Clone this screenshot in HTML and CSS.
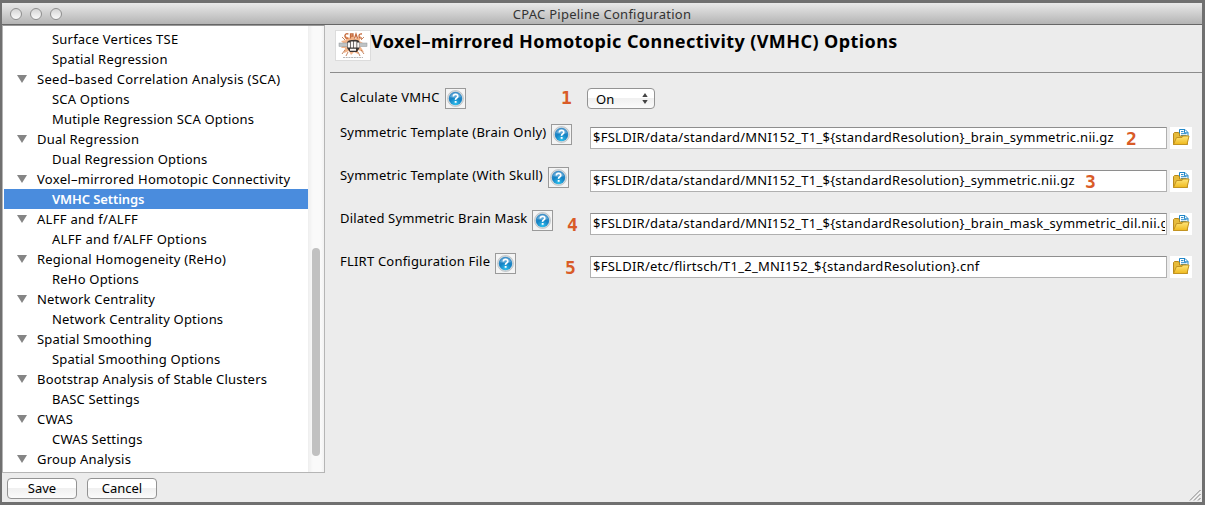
FILE: index.html
```html
<!DOCTYPE html>
<html lang="en">
<head>
<meta charset="utf-8">
<title>CPAC Pipeline Configuration</title>
<link rel="stylesheet" href="styles.css">
</head>
<body>
<svg width="0" height="0" class="defs" aria-hidden="true">
  <defs>
    <radialGradient id="blue" cx="50%" cy="90%" r="85%">
      <stop offset="0" stop-color="#2fc0ee"/><stop offset=".55" stop-color="#1482c4"/><stop offset="1" stop-color="#3f8fc8"/>
    </radialGradient>
    <linearGradient id="gold" x1="0" y1="0" x2="0" y2="1">
      <stop offset="0" stop-color="#ffe67a"/><stop offset="1" stop-color="#efb91d"/>
    </linearGradient>
    <symbol id="help" viewBox="0 0 17 17">
      <circle cx="8.5" cy="8.5" r="8" fill="#d5dadd" stroke="#b3babe" stroke-width=".7"/>
      <circle cx="8.5" cy="8.5" r="6.7" fill="url(#blue)"/>
      <path d="M3 7a5.8 5.8 0 0 1 11 0q-5.500 2-11 0z" fill="#8fc6e8" opacity=".5"/>
      <path d="M6.300 6.500Q6.400 4.400 8.600 4.400T10.800 6.300Q10.800 7.400 9.600 8.100T8.600 9.900" fill="none" stroke="#fff" stroke-width="1.700"/>
      <rect x="7.700" y="11" width="1.900" height="1.800" fill="#fff"/>
    </symbol>
    <symbol id="folder" viewBox="0 0 22 22">
      <path d="M9.500 2.500h5.500l3 3v6h-8.500z" fill="#fff" stroke="#2187c9"/>
      <path d="M14.500 2.500v3.300h3.500M11 4.600h2.500M11 6.700h5.500M11 8.500h5.500" fill="none" stroke="#2187c9"/>
      <path d="M3.500 17.500v-11l1-1h4l1 1.500v2h8v8.500z" fill="#e6bc3c" stroke="#b98a1c"/>
      <path d="M3.500 17.500l3-7h5.500l1-1.500h6l-2 8.500z" fill="url(#gold)" stroke="#c39422"/>
    </symbol>
  </defs>
</svg>
<div class="window">
  <header class="titlebar">
    <div class="lights"><i></i><i></i><i></i></div>
    <span class="title">CPAC Pipeline Configuration</span>
  </header>
  <div class="content">
    <aside class="side">
      <div class="tree">
        <ul class="items">
          <li class="leaf">Surface Vertices TSE</li>
          <li class="leaf">Spatial Regression</li>
          <li class="node wide">Seed–based Correlation Analysis (SCA)</li>
          <li class="leaf">SCA Options</li>
          <li class="leaf">Mutiple Regression SCA Options</li>
          <li class="node">Dual Regression</li>
          <li class="leaf">Dual Regression Options</li>
          <li class="node wide">Voxel–mirrored Homotopic Connectivity</li>
          <li class="leaf selected">VMHC Settings</li>
          <li class="node wide">ALFF and f/ALFF</li>
          <li class="leaf wide">ALFF and f/ALFF Options</li>
          <li class="node">Regional Homogeneity (ReHo)</li>
          <li class="leaf">ReHo Options</li>
          <li class="node">Network Centrality</li>
          <li class="leaf">Network Centrality Options</li>
          <li class="node">Spatial Smoothing</li>
          <li class="leaf">Spatial Smoothing Options</li>
          <li class="node">Bootstrap Analysis of Stable Clusters</li>
          <li class="leaf">BASC Settings</li>
          <li class="node">CWAS</li>
          <li class="leaf">CWAS Settings</li>
          <li class="node">Group Analysis</li>
        </ul>
        <div class="scroll"><div class="thumb"></div></div>
      </div>
      <div class="buttons"><div class="btn">Save</div><div class="btn">Cancel</div></div>
    </aside>
    <main class="panel">
      <div class="heading">
        <svg class="logo" viewBox="0 0 36 31">
          <rect x=".5" y=".5" width="35" height="30" fill="#fff" stroke="#dcdcdc"/>
          <path d="M18 5l2 4 6-3-1.500 5 3.500 2-3 3 4 6-6-2 0 4-4-2-3 3-2-4-5 2 1-5-4 0 3-4-3-3 5-1-2-5 5 3z" fill="#f3b58a"/>
          <path d="M10 20l-3 4M26 20l3 4M10 10L7 7M26 10l3-3M13 22l-2 4M23 22l2 4" stroke="#b5673a" fill="none" stroke-width=".8"/>
          <path d="M13.500 4q-3.500-1-3.500 2t3.500 2M15.500 8.500V4h2.500v2h-2M19.500 8.500l1.500-4.500 1.500 4.500M27 4q-3-.5-3 2t3 2" fill="none" stroke="#c4683a" stroke-width="1.300"/>
          <rect x="4" y="13" width="28" height="3.500" fill="#bfc4c6" stroke="#92979a" stroke-width=".5"/>
          <path d="M12 12q2-2.500 5.500-2 6-1 7 2v6l-2.500 4h-7l-3-4z" fill="#3a3432"/>
          <path d="M12.600 12.500h2.500v5h-2.500zM15.800 11.500h2.500v6h-2.500zM19 11.500h2.500v6H19zM22.200 12.500h2.200v5h-2.200zM15 18.700h6v2h-6z" fill="#f8f5f3"/>
          <path d="M8 27.500h20" stroke="#b5b5b5" stroke-dasharray="2 .7"/>
        </svg>
        <h1>Voxel–mirrored Homotopic Connectivity (VMHC) Options</h1>
      </div>
      <div class="form">
        <div class="row first">
          <label class="l1">Calculate VMHC</label><span class="help"><svg><use href="#help"/></svg></span>
          <div class="select"><span>On</span><svg viewBox="0 0 6 11"><path d="M3 0l2.700 4H.3zM3 11L.3 7h5.400z" fill="#444"/></svg></div>
          <b class="num n1">1</b>
        </div>
        <div class="row">
          <div class="name"><label class="l2">Symmetric Template (Brain Only)</label><span class="help"><svg><use href="#help"/></svg></span></div>
          <div class="field"><span>$FSLDIR/data/standard/MNI152_T1_${standardResolution}_brain_symmetric.nii.gz</span></div>
          <svg class="folder"><use href="#folder"/></svg>
          <b class="num n2">2</b>
        </div>
        <div class="row">
          <div class="name"><label class="l3">Symmetric Template (With Skull)</label><span class="help"><svg><use href="#help"/></svg></span></div>
          <div class="field"><span>$FSLDIR/data/standard/MNI152_T1_${standardResolution}_symmetric.nii.gz</span></div>
          <svg class="folder"><use href="#folder"/></svg>
          <b class="num n3">3</b>
        </div>
        <div class="row">
          <div class="name"><label class="l4">Dilated Symmetric Brain Mask</label><span class="help"><svg><use href="#help"/></svg></span></div>
          <div class="field"><span>$FSLDIR/data/standard/MNI152_T1_${standardResolution}_brain_mask_symmetric_dil.nii.gz</span></div>
          <svg class="folder"><use href="#folder"/></svg>
          <b class="num n4">4</b>
        </div>
        <div class="row">
          <div class="name"><label class="l5">FLIRT Configuration File</label><span class="help"><svg><use href="#help"/></svg></span></div>
          <div class="field"><span>$FSLDIR/etc/flirtsch/T1_2_MNI152_${standardResolution}.cnf</span></div>
          <svg class="folder"><use href="#folder"/></svg>
          <b class="num n5">5</b>
        </div>
      </div>
    </main>
  </div>
  <svg class="grip" viewBox="0 0 12 12"><path d="M1 11.500L11.500 1M5 11.500L11.500 5M9 11.500L11.500 9" fill="none" stroke="#777" stroke-width="1"/><path d="M2.200 11.500L11.500 2.200M6.200 11.500L11.500 6.200" fill="none" stroke="#fff" stroke-width=".7"/></svg>
</div>
</body>
</html>
```
FILE: styles.css
```css
* { box-sizing: border-box; }
body {
  margin: 0; width: 1205px; height: 505px; overflow: hidden;
  background: #707070; padding: 3px 3px 3px 2px;
  font: 13px/20px "Noto Sans", sans-serif; color: #000;
}
.defs { position: absolute; }
.window { position: relative; height: 499px; background: #ececec; display: flex; flex-direction: column; }
.titlebar {
  height: 22px; flex: none; display: flex; align-items: center; justify-content: center; position: relative;
  background: linear-gradient(#e9e9e9, #b4b4b4); border-bottom: 1px solid #666;
}
.title { font-size: 13px; letter-spacing: .26px; color: #333; }
.lights { position: absolute; left: 8px; top: 5px; display: flex; gap: 8px; }
.lights i { width: 12px; height: 12px; border-radius: 50%; border: 1px solid #8f8f8f; background: linear-gradient(#d5d5d5, #fafafa); }
.content { flex: 1; display: flex; min-height: 0; }
.side { width: 323px; }
.tree { height: 448px; display: flex; background: #fff; border: 1px solid #b5b5b5; border-top-color: #999; overflow: hidden; }
.items { list-style: none; margin: 0; padding: 3px 0 0 1px; width: 305px; flex: none; letter-spacing: .2px; }
.items li { height: 20px; line-height: 20px; white-space: nowrap; }
.leaf { padding-left: 48px; }
.node { padding-left: 13px; display: flex; align-items: center; }
.node::before { content: ""; border: 5px solid transparent; border-top: 8px solid #858585; border-bottom: 0; margin-right: 10px; }
.wide { letter-spacing: .29px; }
.selected { background: #4a8cdd; color: #fff; font-weight: 600; letter-spacing: -.1px; }
.scroll { flex: 1; background: linear-gradient(90deg, #eee, #fafafa 30%, #fafafa 80%, #f2f2f2); padding: 222px 0 0 4px; }
.thumb { width: 8px; height: 208px; border-radius: 4px; background: #c1c1c1; }
.buttons { display: flex; gap: 10px; padding: 5px 0 0 5px; }
.btn {
  width: 70px; height: 21px; border: 1px solid #939393; border-radius: 4px; text-align: center; line-height: 19px;
  background: linear-gradient(#fff, #fff 45%, #f0f0f0 50%, #fbfbfb);
}
.panel { flex: 1; padding-left: 5px; }
.heading { height: 48px; border-bottom: 1px solid #8c8c8c; display: flex; padding: 5px 0 0 5px; }
.logo { width: 36px; height: 31px; }
h1 { margin: 0; font-size: 18px; line-height: 22px; font-weight: 700; letter-spacing: .42px; white-space: nowrap; }
.form { padding-left: 10px; }
.row { position: relative; height: 43px; display: flex; white-space: nowrap; padding-top: 8px; }
.row.first { height: 46px; padding-top: 15px; }
.name { display: flex; width: 250px; margin-top: -3px; }
label { line-height: 18px; letter-spacing: .21px; }
.name label { line-height: 16px; }
.help { width: 21px; height: 21px; border: 1px solid #9a9a9a; background: #f4f4f4; display: flex; padding: 1px; margin-left: 5px; flex: none; }
.help svg { width: 17px; height: 17px; }
.select {
  width: 68px; height: 21px; margin-left: 121px; border: 1px solid #939393; border-radius: 4px;
  background: linear-gradient(#fff, #fff 45%, #f0f0f0 50%, #fbfbfb);
  display: flex; align-items: center; justify-content: space-between; padding: 0 6px 0 8px; line-height: 18px;
}
.select svg { width: 6px; height: 11px; }
.field { width: 577px; height: 22px; background: #fff; border: 1px solid #b0b0b0; border-top: 1px solid #8e8e8e; overflow: hidden; padding: 0 1px 0 2px; line-height: 18px; letter-spacing: .26px; }
.field span { display: block; overflow: hidden; }
.folder { width: 22px; height: 22px; margin-left: 3px; background: #fff; }
.num { position: absolute; font: 700 18px/20px "DejaVu Sans Mono", monospace; color: #d95b27; }
.l1 { width: 100px; } .l2 { width: 206px; } .l3 { width: 203px; } .l4 { width: 187px; letter-spacing: .15px; } .l5 { width: 150px; }
.n1 { left: 221px; top: 15px; }
.n2 { left: 786px; top: 10px; }
.n3 { left: 745px; top: 10px; }
.n4 { left: 227px; top: 10px; }
.n5 { left: 225px; top: 10px; }
.grip { position: absolute; right: 1px; bottom: 1px; width: 12px; height: 12px; }
```
